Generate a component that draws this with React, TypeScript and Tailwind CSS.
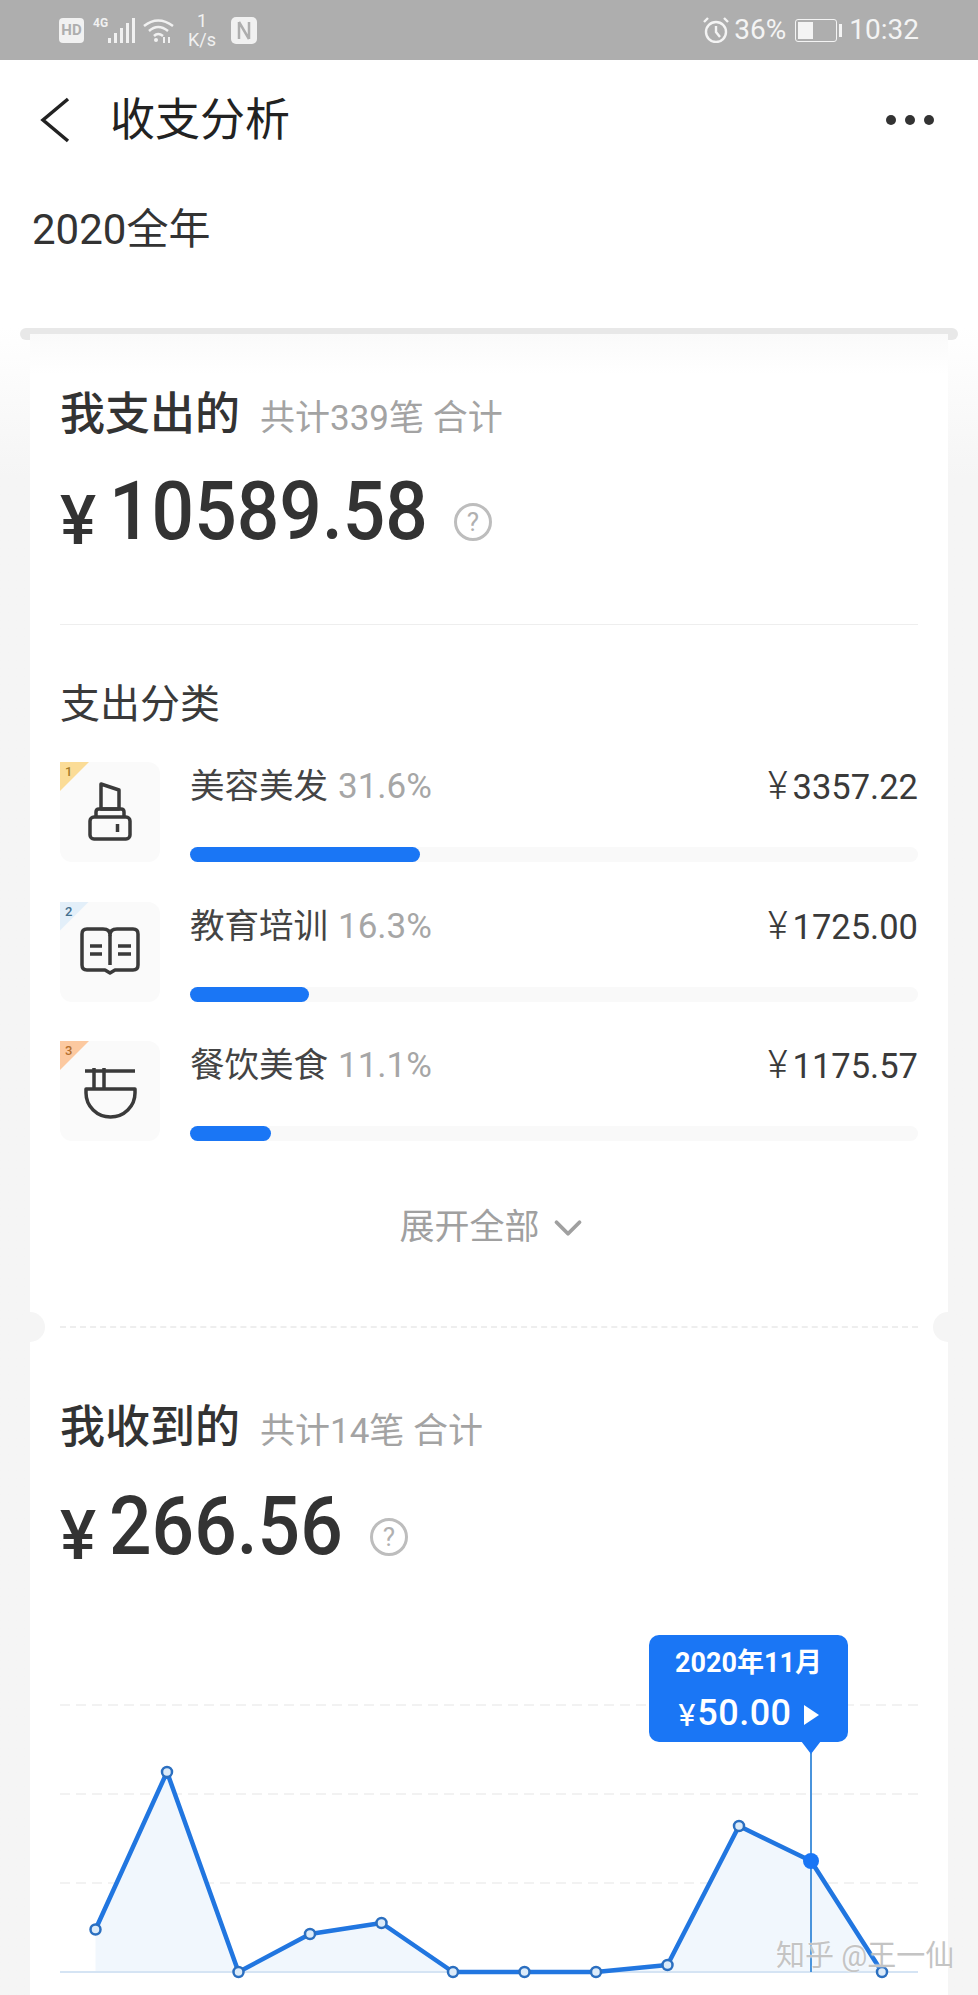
import React from 'react';
import { ChevronDown } from 'lucide-react';

const FONT = 'font-[Roboto,"Noto_Sans_CJK_SC",sans-serif]';

type Category = {
  rank: string;
  name: string;
  percent: string;
  amount: string;
  bar: string;
  corner: string;
  rankColor: string;
  icon: React.ReactNode;
};

const LipstickIcon = () => (
  <svg width="100" height="100" viewBox="0 0 100 100" fill="none" stroke="#3a3a3a" strokeWidth="3.5" strokeLinejoin="round">
    <path d="M41 22 L59 28 V47 H41 Z" />
    <path d="M36 55 V50 Q36 47 39 47 H61 Q64 47 64 50 V55" />
    <rect x="30" y="55" width="40" height="22" rx="4" />
    <path d="M57.5 62 V70" />
  </svg>
);

const BookIcon = () => (
  <svg width="100" height="100" viewBox="0 0 100 100" fill="none" stroke="#3a3a3a" strokeWidth="3.5" strokeLinejoin="round">
    <path d="M27 27 H43 Q50 27 50 33 Q50 27 57 27 H73 Q78 27 78 32 V63 Q78 68 73 68 H55 L50 71 L45 68 H27 Q22 68 22 63 V32 Q22 27 27 27 Z" />
    <path d="M50 33 V63 M30 44 H42 M30 52 H42 M58 44 H71 M58 52 H71" />
  </svg>
);

const BowlIcon = () => (
  <svg width="100" height="100" viewBox="0 0 100 100" fill="none" stroke="#3a3a3a" strokeWidth="3.5" strokeLinejoin="round">
    <path d="M25 30 H75 M34 27 V48 M44 27 V48" />
    <path d="M26 48 H75 V52 A24.5 24 0 0 1 26 52 Z" />
  </svg>
);

const categories: Category[] = [
  { rank: '1', name: '美容美发', percent: '31.6%', amount: '3357.22', bar: 'w-[230px]', corner: 'bg-[#fbdc97]', rankColor: 'text-[#a67c2a]', icon: <LipstickIcon /> },
  { rank: '2', name: '教育培训', percent: '16.3%', amount: '1725.00', bar: 'w-[119px]', corner: 'bg-[#e3eff9]', rankColor: 'text-[#44708f]', icon: <BookIcon /> },
  { rank: '3', name: '餐饮美食', percent: '11.1%', amount: '1175.57', bar: 'w-[81px]', corner: 'bg-[#fcc9a0]', rankColor: 'text-[#b5702f]', icon: <BowlIcon /> },
];

// chart points, in the chart's own coordinates (origin at x 60, y 1634 of the page)
const points: [number, number][] = [
  [35.5, 294.5], [107, 137], [178.5, 337], [250, 299], [321.5, 288], [393, 337],
  [464.5, 337], [536, 337], [607.5, 330], [679, 191], [751, 226], [822, 337],
];

const StatusLeft = () => (
  <div className="flex items-center">
    <div className="flex h-[25px] w-[25px] items-center justify-center rounded-[4px] bg-[#f1f1f1] text-[15px] font-bold leading-none text-[#aeaeae]">HD</div>
    <div className="ml-[9px] flex h-[25px] w-[42px] items-start">
      <span className="w-[15px] text-[12px] font-bold leading-[11px] text-[#f1f1f1]">4G</span>
      <svg width="27" height="25" viewBox="0 0 27 25" fill="#f1f1f1">
        <rect x="0" y="20" width="3" height="5" />
        <rect x="6" y="15" width="3" height="10" />
        <rect x="12" y="10" width="3" height="15" />
        <rect x="18" y="5" width="3" height="20" />
        <rect x="24" y="0" width="3" height="25" />
      </svg>
    </div>
    <svg className="ml-[8px]" width="32" height="25" viewBox="0 0 32 25" fill="none" stroke="#f1f1f1" strokeWidth="2.5">
      <path d="M1 8 Q15 -3 30 8" />
      <path d="M6 13 Q15 5 25 13" />
      <path d="M11 18 Q15 14 20 18" />
      <circle cx="13" cy="22" r="2" fill="#f1f1f1" stroke="none" />
      <path d="M21 19 V25 M26 19 V25" strokeWidth="2" />
    </svg>
    <div className="ml-[12px] flex w-[30px] flex-col items-center text-[#f1f1f1]">
      <span className="text-[18px] leading-[18px]">1</span>
      <span className="mt-[1px] text-[18px] leading-[18px]">K/s</span>
    </div>
    <svg className="ml-[14px]" width="26" height="27" viewBox="0 0 26 27">
      <rect width="26" height="27" rx="5" fill="#f1f1f1" />
      <path d="M8 22 V5 M18 22 V5 M8 5 L18 22" fill="none" stroke="#aeaeae" strokeWidth="2.5" />
    </svg>
  </div>
);

const StatusRight = () => (
  <div className="flex items-center text-[28px] leading-none text-[#f4f4f4]">
    <svg width="26" height="26" viewBox="0 0 26 26" fill="none" stroke="#f4f4f4" strokeWidth="2.4">
      <circle cx="13" cy="15" r="10" />
      <path d="M13 9 V15 L17 20 M1 5 L5 1 M21 1 L25 5" />
    </svg>
    <span className="ml-[5px]">36%</span>
    <div className="ml-[9px] flex items-center">
      <div className="h-[23px] w-[42px] rounded-[3px] border border-[#f4f4f4] p-[2px]">
        <div className="h-full w-[15px] bg-[#f4f4f4]" />
      </div>
      <div className="ml-[2px] h-[13px] w-[3px] bg-[#f4f4f4]" />
    </div>
    <span className="ml-[7px]">10:32</span>
  </div>
);

const QuestionIcon = () => (
  <div className="flex h-[38px] w-[38px] items-center justify-center rounded-full border-[3px] border-[#bdbdbd] text-[26px] leading-none text-[#b0b0b0]">?</div>
);

const SectionHead = ({ title, sub }: { title: string; sub: string }) => (
  <div className="flex items-baseline">
    <span className="text-[45px] font-medium leading-[50px] text-[#333333]">{title}</span>
    <span className="ml-[20px] text-[35px] leading-[50px] text-[#a3a3a3]">{sub}</span>
  </div>
);

const Amount = ({ value, pull, iconGap }: { value: string; pull: string; iconGap: string }) => (
  <div className="flex h-[80px] items-center text-[#333333]">
    <span className="mt-[18px] text-[68px] font-medium leading-none">¥</span>
    <span className={`ml-[13px] inline-block origin-left scale-x-[0.925] text-[81px] font-medium leading-[80px] ${pull}`}>{value}</span>
    <div className={`mt-[20px] ${iconGap}`}>
      <QuestionIcon />
    </div>
  </div>
);

const CategoryRow = ({ item }: { item: Category }) => (
  <div className="flex h-[100px] gap-[30px]">
    <div className="relative h-[100px] w-[100px] shrink-0 rounded-[12px] bg-[#fafafa]">
      {item.icon}
      <div className={`absolute left-0 top-0 h-[29px] w-[29px] [clip-path:polygon(0_0,100%_0,0_100%)] ${item.corner}`} />
      <span className={`absolute left-[5px] top-[2px] text-[13px] font-medium leading-[16px] ${item.rankColor}`}>{item.rank}</span>
    </div>
    <div className="flex flex-1 flex-col justify-between">
      <div className="flex items-center justify-between pt-[2px] text-[34.5px] leading-[44px]">
        <div>
          <span className="text-[#444444]">{item.name}</span>
          <span className="ml-[10px] text-[35px] text-[#a6a6a6]">{item.percent}</span>
        </div>
        <div className="text-[#3a3a3a]">
          <span className="mr-[5px] text-[38px] font-light">¥</span>
          {item.amount}
        </div>
      </div>
      <div className="h-[15px] rounded-full bg-[#f9f9f9]">
        <div className={`h-full rounded-full bg-[#1a76f5] ${item.bar}`} />
      </div>
    </div>
  </div>
);

const Chart = () => (
  <div className="relative h-[361px]">
    <svg className="block" width="858" height="361" viewBox="0 0 858 361" fill="none">
      {[70, 159, 248].map((y) => (
        <line key={y} x1="0" x2="858" y1={y} y2={y} stroke="#eeeeee" strokeWidth="1.5" strokeDasharray="10 6" />
      ))}
      <polygon points={`35.5,337 ${points.map((p) => p.join(',')).join(' ')}`} fill="#f1f7fd" />
      <line x1="0" x2="858" y1="337" y2="337" stroke="#d5e4f4" strokeWidth="2" />
      <line x1="751" x2="751" y1="118" y2="337" stroke="#4a94dc" strokeWidth="2" />
      <polyline points={points.map((p) => p.join(',')).join(' ')} stroke="#2176e0" strokeWidth="4.5" strokeLinejoin="round" />
      {points.map(([x, y]) =>
        x === 751 ? (
          <circle key={x} cx={x} cy={y} r="8" fill="#1a76f5" />
        ) : (
          <circle key={x} cx={x} cy={y} r="5" fill="#dcebf9" stroke="#2b6fc0" strokeWidth="2.5" />
        ),
      )}
      <polygon points="741,106 761,106 751,119" fill="#1a76f5" />
    </svg>
    <div className="absolute left-[589px] top-0 flex h-[107px] w-[199px] flex-col items-center rounded-[10px] bg-[#1a76f5] text-white">
      <span className="mt-[11px] text-[27px] font-bold leading-[34px]">2020年11月</span>
      <div className="mt-[8px] flex items-center leading-[46px]">
        <span className="mt-[4px] text-[32px]">¥</span>
        <span className="ml-[2px] text-[36px] font-medium tracking-[0.5px]">50.00</span>
        <svg className="ml-[12px] mt-[3px]" width="15" height="20" viewBox="0 0 15 20" fill="#ffffff">
          <polygon points="0,0 15,10 0,20" />
        </svg>
      </div>
    </div>
  </div>
);

export default function App() {
  return (
    <div className={`relative h-[1995px] w-[978px] overflow-hidden bg-white ${FONT}`}>
      {/* status bar */}
      <div className="flex h-[60px] items-center justify-between bg-[#aeaeae] pl-[59px] pr-[59px]">
        <StatusLeft />
        <StatusRight />
      </div>

      {/* nav */}
      <div className="flex h-[120px] items-center justify-between pl-[40px] pr-[44px]">
        <div className="flex items-center">
          <svg width="30" height="46" viewBox="0 0 30 46" fill="none" stroke="#222222" strokeWidth="3.5">
            <polyline points="28,2 3,23 28,44" />
          </svg>
          <span className="ml-[40px] text-[45px] leading-none text-[#222222]">收支分析</span>
        </div>
        <div className="flex gap-[9px]">
          <div className="h-[10px] w-[10px] rounded-full bg-[#333333]" />
          <div className="h-[10px] w-[10px] rounded-full bg-[#333333]" />
          <div className="h-[10px] w-[10px] rounded-full bg-[#333333]" />
        </div>
      </div>

      <div className="h-[147px] pl-[32px] pt-[25px] text-[42px] leading-[50px] text-[#333333]">2020全年</div>

      {/* ledger */}
      <div className="h-[1668px] bg-linear-to-b from-white to-[#f5f5f5] to-[150px] pt-px">
        <div className="mx-[20px] h-[12px] rounded-full bg-[#e8e8e8]" />
        <div className="relative mx-[30px] -mt-[6px] bg-linear-to-b from-[#fafafa] to-white to-[40px] px-[30px] pt-[56px]">
          <SectionHead title="我支出的" sub="共计339笔 合计" />
          <div className="mt-[28px]">
            <Amount value="10589.58" pull="-mr-[28px]" iconGap="ml-[28px]" />
          </div>
          <div className="mt-[72px] border-t border-[#eeeeee]" />
          <div className="mt-[55px] text-[40px] leading-[50px] text-[#3a3a3a]">支出分类</div>
          <div className="mt-[32px] flex flex-col gap-[39.5px]">
            {categories.map((c) => (
              <CategoryRow key={c.rank} item={c} />
            ))}
          </div>
          <div className="mt-[64px] flex items-center justify-center gap-[5px] pl-[12px] text-[35px] leading-[44px] text-[#a0a0a0]">
            <span>展开全部</span>
            <ChevronDown size={46} strokeWidth={2} color="#a0a0a0" />
          </div>

          {/* ticket tear */}
          <div className="relative mt-[75px] border-t-2 border-dashed border-[#eeeeee]">
            <div className="absolute -left-[45px] -top-[16px] h-[30px] w-[30px] rounded-full bg-[#f5f5f5]" />
            <div className="absolute -right-[45px] -top-[16px] h-[30px] w-[30px] rounded-full bg-[#f5f5f5]" />
          </div>

          <div className="pt-[75px]">
            <SectionHead title="我收到的" sub="共计14笔 合计" />
            <div className="mt-[30px]">
              <Amount value="266.56" pull="-mr-[20px]" iconGap="ml-[28px]" />
            </div>
          </div>
          <div className="mt-[68px]">
            <Chart />
          </div>
        </div>
      </div>

      {/* watermark */}
      <div className="absolute left-[776px] top-[1938px] text-[29px] leading-[36px] text-[#c4c4c4] [text-shadow:0_0_2px_#ffffff]">知乎 @王一仙</div>
    </div>
  );
}
